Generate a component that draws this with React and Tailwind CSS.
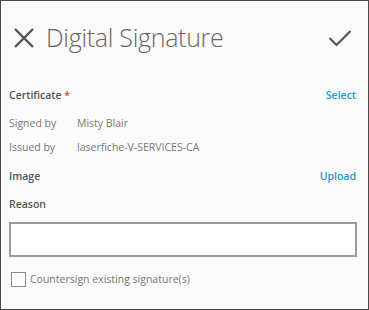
import React from 'react';

export default function App() {
  return (
    <div
      className="w-[369px] h-[310px] bg-[#fafafa] border border-[#4a4a4a] text-[#666] flex flex-col"
      style={{ fontFamily: '"Open Sans", "Liberation Sans", sans-serif' }}
    >
      {/* Header */}
      <div className="flex items-center h-[74px] pl-[12px] pr-[16px]">
        <svg width="22" height="22" viewBox="0 0 22 22" className="shrink-0">
          <path d="M2 2 L20 20 M20 2 L2 20" stroke="#555" strokeWidth="2.4" fill="none" />
        </svg>
        <h1 className="ml-[11px] text-[25px] font-light text-[#666] leading-none tracking-[-0.3px] mb-[1px]">
          Digital Signature
        </h1>
        <svg width="24" height="18" viewBox="0 0 24 18" className="ml-auto shrink-0">
          <path d="M1.5 9 L8.5 16 L22.5 2" stroke="#555" strokeWidth="2.2" fill="none" />
        </svg>
      </div>

      <div className="flex flex-col px-[8px] text-[10.5px]">
        <div className="flex items-center justify-between h-[16px] mt-[13px]">
          <span className="font-semibold text-[#555]">
            Certificate <span className="text-[#e03a3a]">*</span>
          </span>
          <button className="font-semibold text-[#1a9ad6] mr-[4px]">Select</button>
        </div>

        <div className="flex items-center h-[16px] mt-[12px] text-[#777]">
          <span className="w-[68px]">Signed by</span>
          <span>Misty Blair</span>
        </div>
        <div className="flex items-center h-[16px] mt-[8px] text-[#777]">
          <span className="w-[68px]">Issued by</span>
          <span>laserfiche-V-SERVICES-CA</span>
        </div>

        <div className="flex items-center justify-between h-[16px] mt-[13px]">
          <span className="font-semibold text-[#555]">Image</span>
          <button className="font-semibold text-[#1a9ad6] mr-[4px]">Upload</button>
        </div>

        <div className="flex items-center h-[16px] mt-[12px]">
          <span className="font-semibold text-[#555]">Reason</span>
        </div>

        <input className="mt-[9px] h-[35px] w-[348px] bg-white border-2 border-[#9a9a9a] outline-none" />

        <label className="flex items-center mt-[15px] ml-[2px] gap-[4px] text-[#777]">
          <span className="w-[15px] h-[15px] border border-[#888] bg-white" />
          <span>Countersign existing signature(s)</span>
        </label>
      </div>
    </div>
  );
}
